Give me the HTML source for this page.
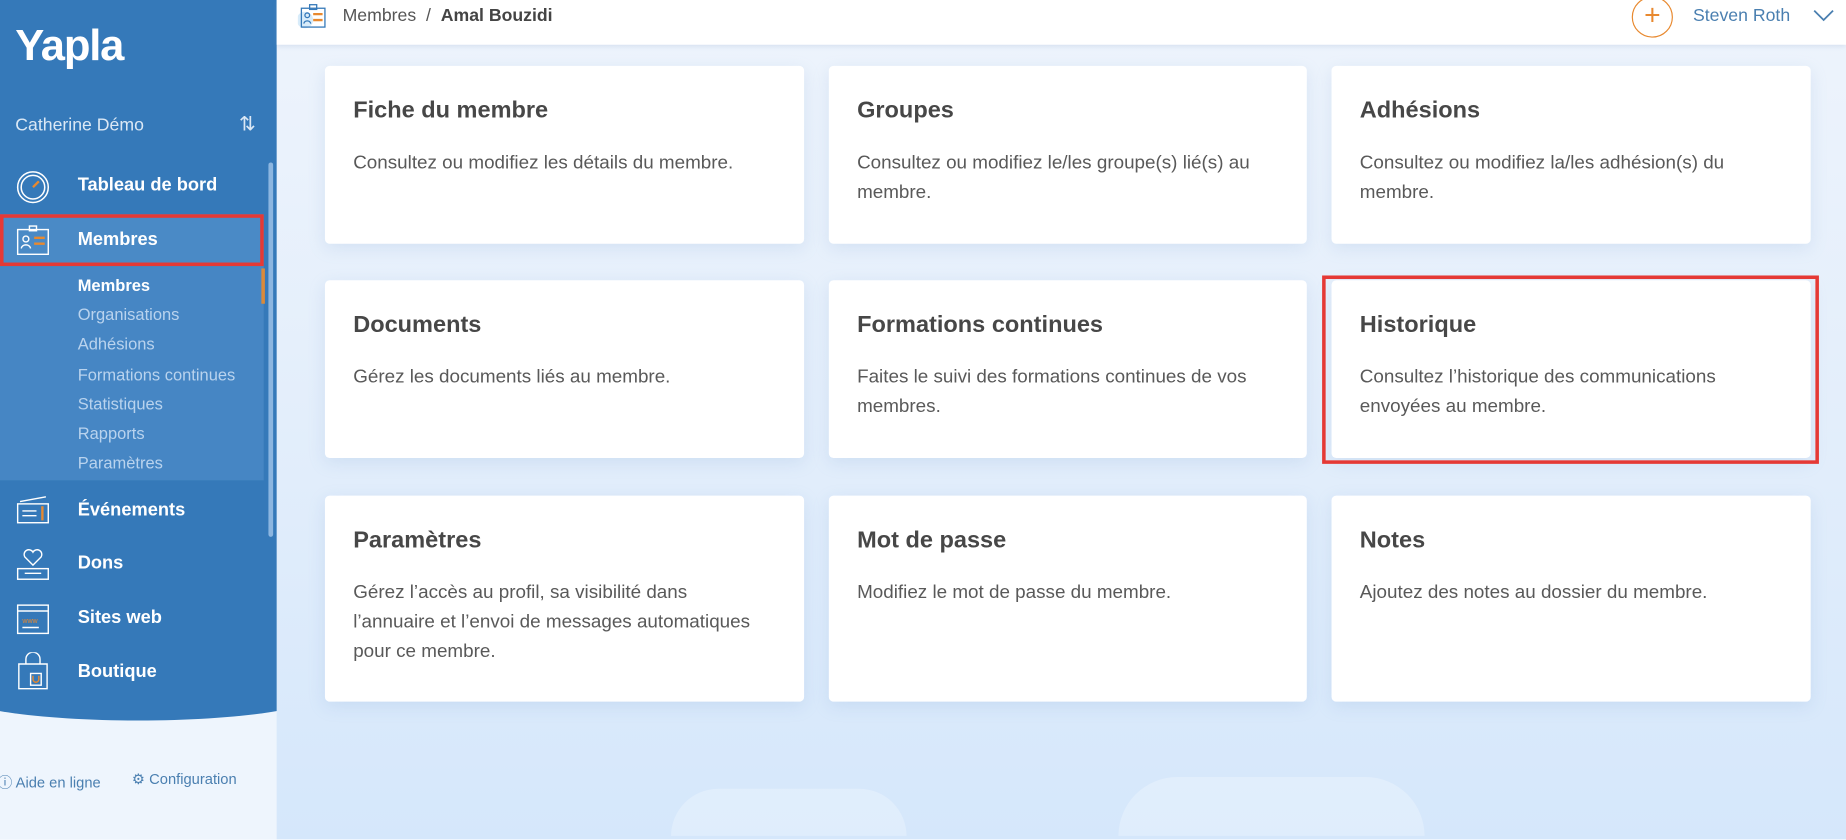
<!DOCTYPE html>
<html><head><meta charset="utf-8"><style>
html,body{margin:0;padding:0;width:1846px;height:840px;overflow:hidden;font-family:"Liberation Sans",sans-serif;}
#w{position:absolute;left:0;top:0;width:1568px;height:713px;transform:scale(1.17730);transform-origin:0 0;background:linear-gradient(180deg,#eef4fc 0%,#e3eefb 50%,#d5e7fb 100%);overflow:hidden}
.sb{position:absolute;left:0;top:0;width:235px;height:713px;background:#eef5fd;overflow:hidden}
.blue{position:absolute;left:-40px;top:-400px;width:315px;height:1012px;background:#3579b9;border-radius:0 0 50% 50%/0 0 24px 24px}
.abs{position:absolute}
.logo{left:13px;top:18px;color:#fff;font-weight:bold;font-size:37px;letter-spacing:-1px}
.cat{left:13px;top:98px;color:#dbe8f5;font-size:15px}
.sub{position:absolute;left:0;top:182px;width:224px;height:226px;background:#4686c4}
.mi{position:absolute;left:66px;color:#fff;font-size:15.5px;font-weight:bold}
.si{position:absolute;left:66px;color:#b9d3ee;font-size:14px}
.ic{position:absolute;left:13px}
.hdr{position:absolute;left:235px;top:0;width:1333px;height:38px;background:#fff;box-shadow:0 2px 4px rgba(120,150,190,.2)}
.card{position:absolute;background:#fff;border-radius:4px;box-shadow:0 4px 14px rgba(120,160,210,.18)}
.card h3{position:absolute;left:24px;top:27px;margin:0;font-size:20px;font-weight:bold;color:#474747}
.card p{position:absolute;left:24px;top:70px;margin:0;font-size:16px;line-height:25px;color:#595959;width:362px}
.foot{font-size:12.5px;color:#4a7fb0}
</style></head><body><div id="w">
<div class="sb">
<div class="blue"></div>
<div class="sub"></div>
<div class="abs" style="left:0;top:182px;width:218px;height:38px;border:3px solid #e53935;background:#4a8ac6"></div>
<div class="abs" style="left:222px;top:228px;width:3px;height:30px;background:#d98a3a"></div>
<div class="abs" style="left:228px;top:138px;width:4px;height:318px;background:#8cb6e0;border-radius:2px"></div>
<div class="abs logo">Yapla</div>
<div class="abs cat">Catherine Démo</div>
<div class="abs" style="left:203px;top:96px;color:#dbe8f5;font-size:17px">⇅</div>
<svg class="ic" style="top:144px" width="30" height="30" viewBox="0 0 30 30" fill="none" stroke="#fff" stroke-width="1.3"><circle cx="15" cy="15" r="13"/><circle cx="15" cy="15" r="10"/><path d="M15 15 L20 10" stroke="#e8892f" stroke-width="2"/></svg>
<div class="mi" style="top:149px">Tableau de bord</div>
<svg class="ic" style="top:190px" width="30" height="28" viewBox="0 0 30 28" fill="none" stroke="#fff" stroke-width="1.2"><rect x="2" y="5" width="26" height="21"/><rect x="12" y="2" width="6" height="4"/><circle cx="9" cy="13" r="2.5"/><path d="M5 21c1-4 7-4 8 0"/><path d="M16 12h9M16 17h9" stroke="#e8892f" stroke-width="2"/></svg>
<div class="mi" style="top:195px">Membres</div>
<div class="si" style="top:234px;color:#fff;font-weight:bold">Membres</div>
<div class="si" style="top:259px">Organisations</div>
<div class="si" style="top:284px">Adhésions</div>
<div class="si" style="top:310px">Formations continues</div>
<div class="si" style="top:335px">Statistiques</div>
<div class="si" style="top:360px">Rapports</div>
<div class="si" style="top:385px">Paramètres</div>
<svg class="ic" style="top:420px" width="30" height="26" viewBox="0 0 30 26" fill="none" stroke="#fff" stroke-width="1.2"><rect x="2" y="8" width="26" height="16"/><path d="M4 6l22-4" /><path d="M6 14h12M6 18h12"/><path d="M23 10v12" stroke="#e8892f" stroke-width="2"/></svg>
<div class="mi" style="top:425px">Événements</div>
<svg class="ic" style="top:464px" width="30" height="30" viewBox="0 0 30 30" fill="none" stroke="#fff" stroke-width="1.2"><path d="M15 16 L8 9a4 4 0 0 1 7-4a4 4 0 0 1 7 4z"/><rect x="2" y="19" width="26" height="9"/><path d="M8 23h14"/></svg>
<div class="mi" style="top:470px">Dons</div>
<svg class="ic" style="top:512px" width="30" height="28" viewBox="0 0 30 28" fill="none" stroke="#fff" stroke-width="1.2"><rect x="2" y="2" width="26" height="24"/><path d="M2 7h26"/><text x="6" y="17" font-size="6" fill="#e8892f" stroke="none">www</text><path d="M6 21h14"/></svg>
<div class="mi" style="top:516px">Sites web</div>
<svg class="ic" style="top:554px" width="30" height="32" viewBox="0 0 30 32" fill="none" stroke="#fff" stroke-width="1.2"><path d="M3 10h24v21H3z"/><path d="M9 10V6a6 6 0 0 1 12 0v4"/><path d="M13 18h9v10h-9z"/><path d="M15 20v3a2 2 0 0 0 5 0v-3" stroke="#e8892f"/></svg>
<div class="mi" style="top:562px">Boutique</div>
<div class="abs foot" style="left:-2px;top:654px">ⓘ Aide en ligne</div>
<div class="abs foot" style="left:112px;top:654px">⚙ Configuration</div>
</div>
<div class="hdr">
<svg class="abs" style="left:18px;top:3px" width="26" height="22" viewBox="0 0 26 22" fill="none" stroke="#3579b9" stroke-width="1.1"><circle cx="6" cy="14" r="7" fill="#d8ecfa" stroke="none"/><rect x="3" y="4" width="20" height="16"/><rect x="10" y="1" width="6" height="4"/><circle cx="8" cy="10" r="2"/><path d="M5 17c1-3 5-3 6 0"/><path d="M13 9h8M13 14h8" stroke="#e8892f" stroke-width="2"/></svg>
<div class="abs" style="left:56px;top:5px;font-size:15px;color:#555">Membres &nbsp;/ &nbsp;<b style="color:#444">Amal Bouzidi</b></div>
<div class="abs" style="left:1151px;top:-3px;width:33px;height:33px;border:1px solid #e8892f;border-radius:50%;color:#e8892f;font-size:24px;text-align:center;line-height:31px">+</div>
<div class="abs" style="left:1203px;top:5px;font-size:15px;color:#4a7fb0">Steven Roth</div>
<svg class="abs" style="left:1304px;top:7px" width="20" height="12" viewBox="0 0 20 12" fill="none" stroke="#4a7fb0" stroke-width="1.5"><path d="M2 2l8 8 8-8"/></svg>
</div>
<div class="abs" style="left:570px;top:670px;width:200px;height:40px;border-radius:100px 100px 0 0;background:rgba(255,255,255,.25)"></div>
<div class="abs" style="left:950px;top:660px;width:260px;height:50px;border-radius:130px 130px 0 0;background:rgba(255,255,255,.25)"></div>
<div class="card" style="left:276px;top:56px;width:407px;height:151px"><h3>Fiche du membre</h3><p>Consultez ou modifiez les détails du membre.</p></div>
<div class="card" style="left:704px;top:56px;width:406px;height:151px"><h3>Groupes</h3><p>Consultez ou modifiez le/les groupe(s) lié(s) au membre.</p></div>
<div class="card" style="left:1131px;top:56px;width:407px;height:151px"><h3>Adhésions</h3><p>Consultez ou modifiez la/les adhésion(s) du membre.</p></div>
<div class="card" style="left:276px;top:238px;width:407px;height:151px"><h3>Documents</h3><p>Gérez les documents liés au membre.</p></div>
<div class="card" style="left:704px;top:238px;width:406px;height:151px"><h3>Formations continues</h3><p>Faites le suivi des formations continues de vos membres.</p></div>
<div class="card" style="left:1131px;top:238px;width:407px;height:151px"><h3>Historique</h3><p>Consultez l’historique des communications envoyées au membre.</p></div>
<div class="abs" style="left:1123px;top:234px;width:416px;height:154px;border:3px solid #e53935"></div>
<div class="card" style="left:276px;top:421px;width:407px;height:175px"><h3>Paramètres</h3><p style="white-space:nowrap">Gérez l’accès au profil, sa visibilité dans<br>l’annuaire et l’envoi de messages automatiques<br>pour ce membre.</p></div>
<div class="card" style="left:704px;top:421px;width:406px;height:175px"><h3>Mot de passe</h3><p>Modifiez le mot de passe du membre.</p></div>
<div class="card" style="left:1131px;top:421px;width:407px;height:175px"><h3>Notes</h3><p>Ajoutez des notes au dossier du membre.</p></div>
</div></body></html>
